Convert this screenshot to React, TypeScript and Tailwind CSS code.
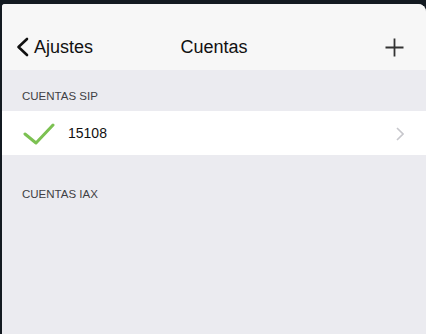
import React from "react";

export default function App() {
  return (
    <div
      className="w-[426px] h-[334px] bg-[#131a21] pt-[4px] pl-[2px] overflow-hidden"
      style={{ fontFamily: '"Liberation Sans", Arial, sans-serif' }}
    >
      <div className="h-full bg-[#ebebf0] rounded-tl-[3px] rounded-tr-[8px] overflow-hidden flex flex-col">
        {/* Nav bar */}
        <div className="h-[66px] bg-[#f7f7f7] flex items-center relative shrink-0 pt-[20px]">
          <div className="flex items-center pl-[13px]">
            <svg width="16" height="20" viewBox="0 0 16 20" className="mr-[3px]">
              <path d="M12 2 L3.5 10 L12 18" fill="none" stroke="#111" strokeWidth="2.6" strokeLinecap="round" strokeLinejoin="round" />
            </svg>
            <span className="text-[18px] text-[#111] leading-none">Ajustes</span>
          </div>
          <div className="absolute left-0 right-0 text-center text-[18px] text-[#111] leading-none pointer-events-none">
            Cuentas
          </div>
          <div className="ml-auto pr-[22px]">
            <svg width="19" height="19" viewBox="0 0 19 19">
              <path d="M9.5 0.5 V18.5 M0.5 9.5 H18.5" stroke="#333" strokeWidth="1.8" />
            </svg>
          </div>
        </div>
        {/* Section header SIP */}
        <div className="h-[41px] flex items-end pl-[20px] pb-[9px] shrink-0">
          <span className="text-[11.5px] text-[#3f3f44] leading-none">CUENTAS SIP</span>
        </div>
        {/* Row */}
        <div className="h-[44px] bg-white flex items-center shrink-0">
          <svg width="32" height="22" viewBox="0 0 32 22" className="ml-[21px] mt-[1px]">
            <path d="M2 11 L13 20 L30 2" fill="none" stroke="#7cc152" strokeWidth="3" strokeLinecap="round" strokeLinejoin="round" />
          </svg>
          <span className="ml-[13px] text-[14px] text-[#111] leading-none">15108</span>
          <svg width="8" height="14" viewBox="0 0 8 14" className="ml-auto mr-[22px] mt-[2px]">
            <path d="M1 1 L7 7 L1 13" fill="none" stroke="#c7c7cc" strokeWidth="1.6" />
          </svg>
        </div>
        {/* Section header IAX */}
        <div className="h-[50px] flex items-end pl-[20px] pb-[5px] shrink-0">
          <span className="text-[11.5px] text-[#3f3f44] leading-none">CUENTAS IAX</span>
        </div>
      </div>
    </div>
  );
}
